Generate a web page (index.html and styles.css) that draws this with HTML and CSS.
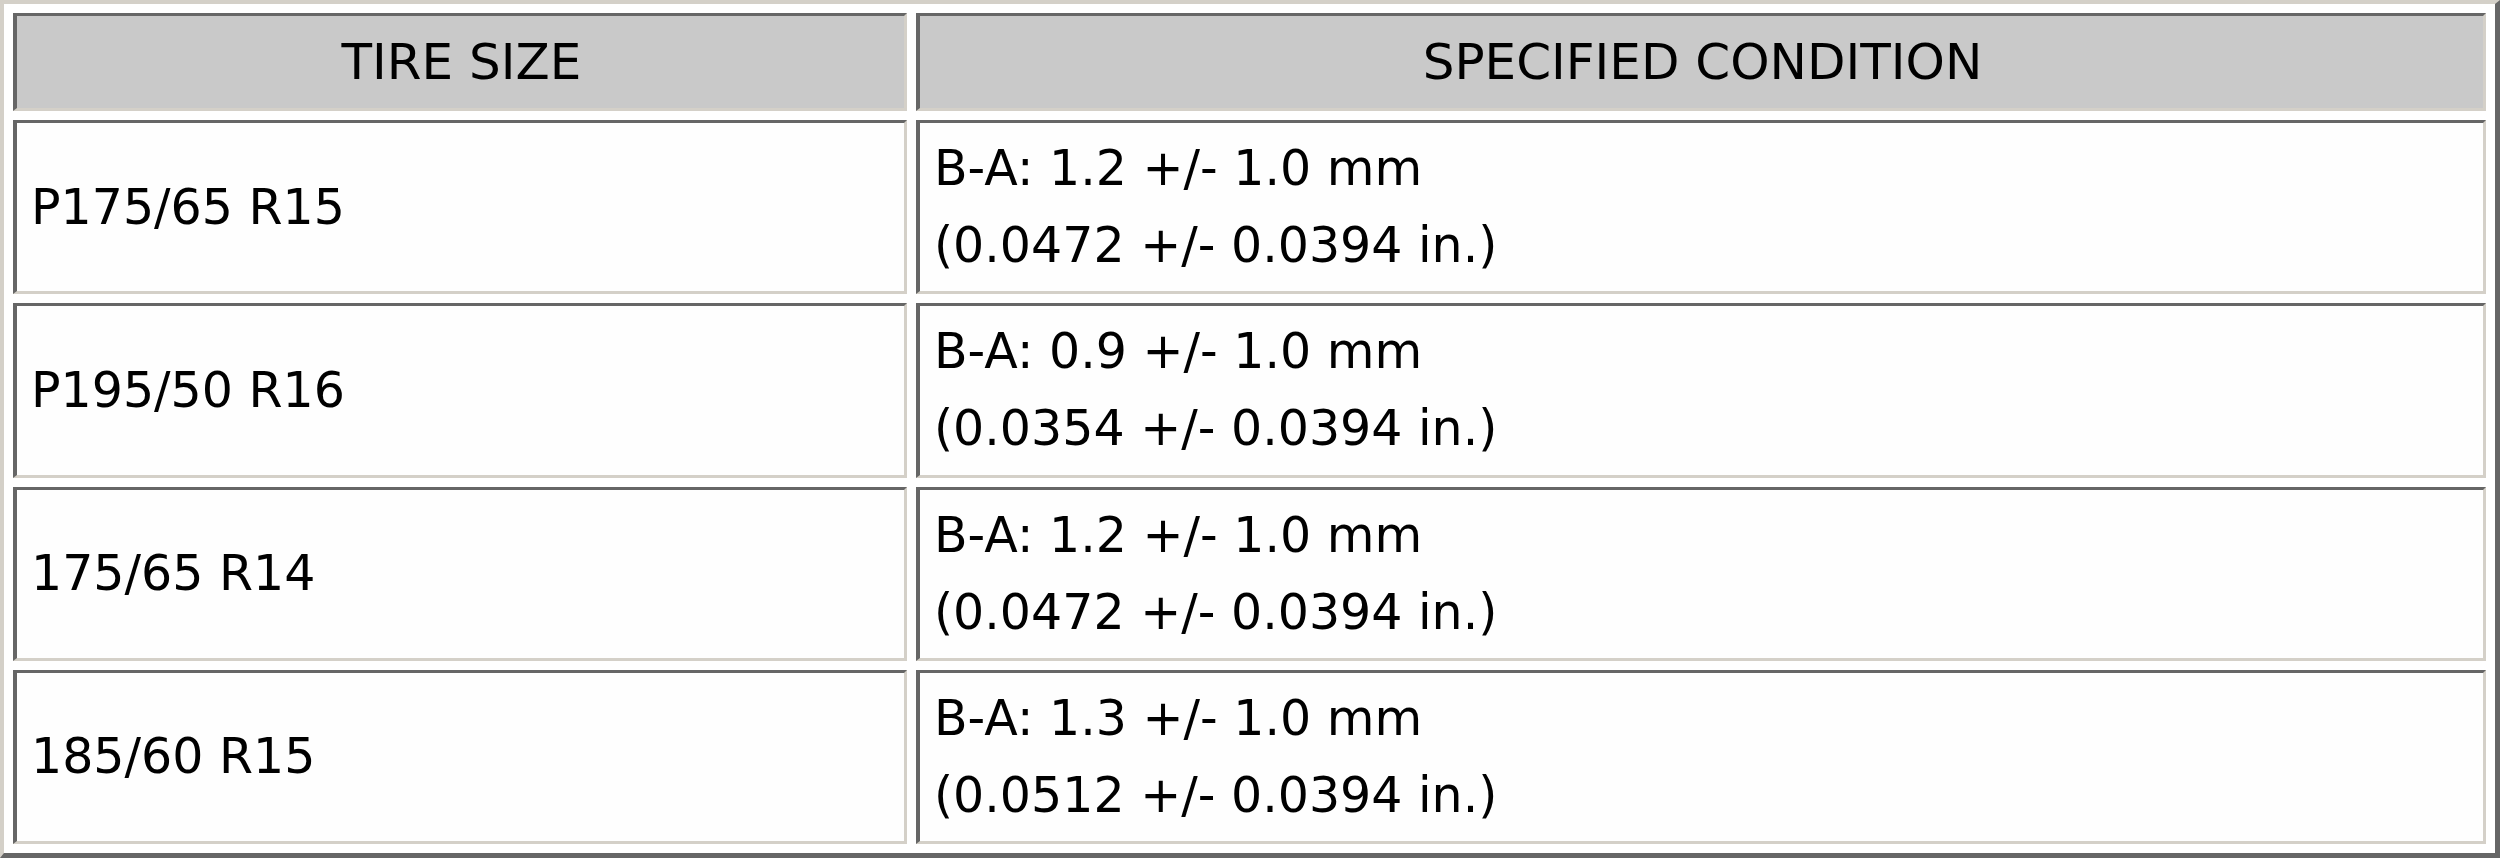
FILE: index.html
```html
<!DOCTYPE html>
<html>
<head>
<meta charset="utf-8">
<title>Tire Size Specification</title>
<link rel="stylesheet" href="styles.css">
</head>
<body>
<table class="spec-table">
  <tr class="head-row">
    <th class="col-size">TIRE SIZE</th>
    <th class="col-cond">SPECIFIED CONDITION</th>
  </tr>
  <tr class="data-row">
    <td class="col-size">P175/65 R15</td>
    <td class="col-cond">B-A: 1.2 +/- 1.0 mm<br>(0.0472 +/- 0.0394 in.)</td>
  </tr>
  <tr class="data-row">
    <td class="col-size">P195/50 R16</td>
    <td class="col-cond">B-A: 0.9 +/- 1.0 mm<br>(0.0354 +/- 0.0394 in.)</td>
  </tr>
  <tr class="data-row">
    <td class="col-size">175/65 R14</td>
    <td class="col-cond">B-A: 1.2 +/- 1.0 mm<br>(0.0472 +/- 0.0394 in.)</td>
  </tr>
  <tr class="data-row">
    <td class="col-size">185/60 R15</td>
    <td class="col-cond">B-A: 1.3 +/- 1.0 mm<br>(0.0512 +/- 0.0394 in.)</td>
  </tr>
</table>
</body>
</html>
```

FILE: styles.css
```css
html, body {
  margin: 0;
  padding: 0;
  background: #ffffff;
}

.spec-table {
  width: 2500px;
  box-sizing: border-box;
  border-collapse: separate;
  border-spacing: 9px;
  border-style: solid;
  border-width: 4px 5px 5px 4px;
  border-color: #d4d0c8 #666666 #666666 #d4d0c8;
  background: #ffffff;
  font-family: "DejaVu Sans", Verdana, sans-serif;
  font-size: 49px;
  color: #000000;
}

.spec-table th,
.spec-table td {
  box-sizing: border-box;
  border-style: solid;
  border-width: 3px 3px 3px 4px;
  border-color: #666666 #d4d0c8 #d4d0c8 #666666;
  padding: 0 12px 0 14px;
  vertical-align: middle;
}

.spec-table th {
  background: #c9c9c9;
  font-weight: normal;
  font-size: 50px;
  text-align: center;
  line-height: 60px;
}

.spec-table td {
  background: #fefefe;
  text-align: left;
  line-height: 77px;
}

.col-size {
  width: 894px;
}

.head-row {
  height: 98px;
}

.data-row {
  height: 174.25px;
}
```
